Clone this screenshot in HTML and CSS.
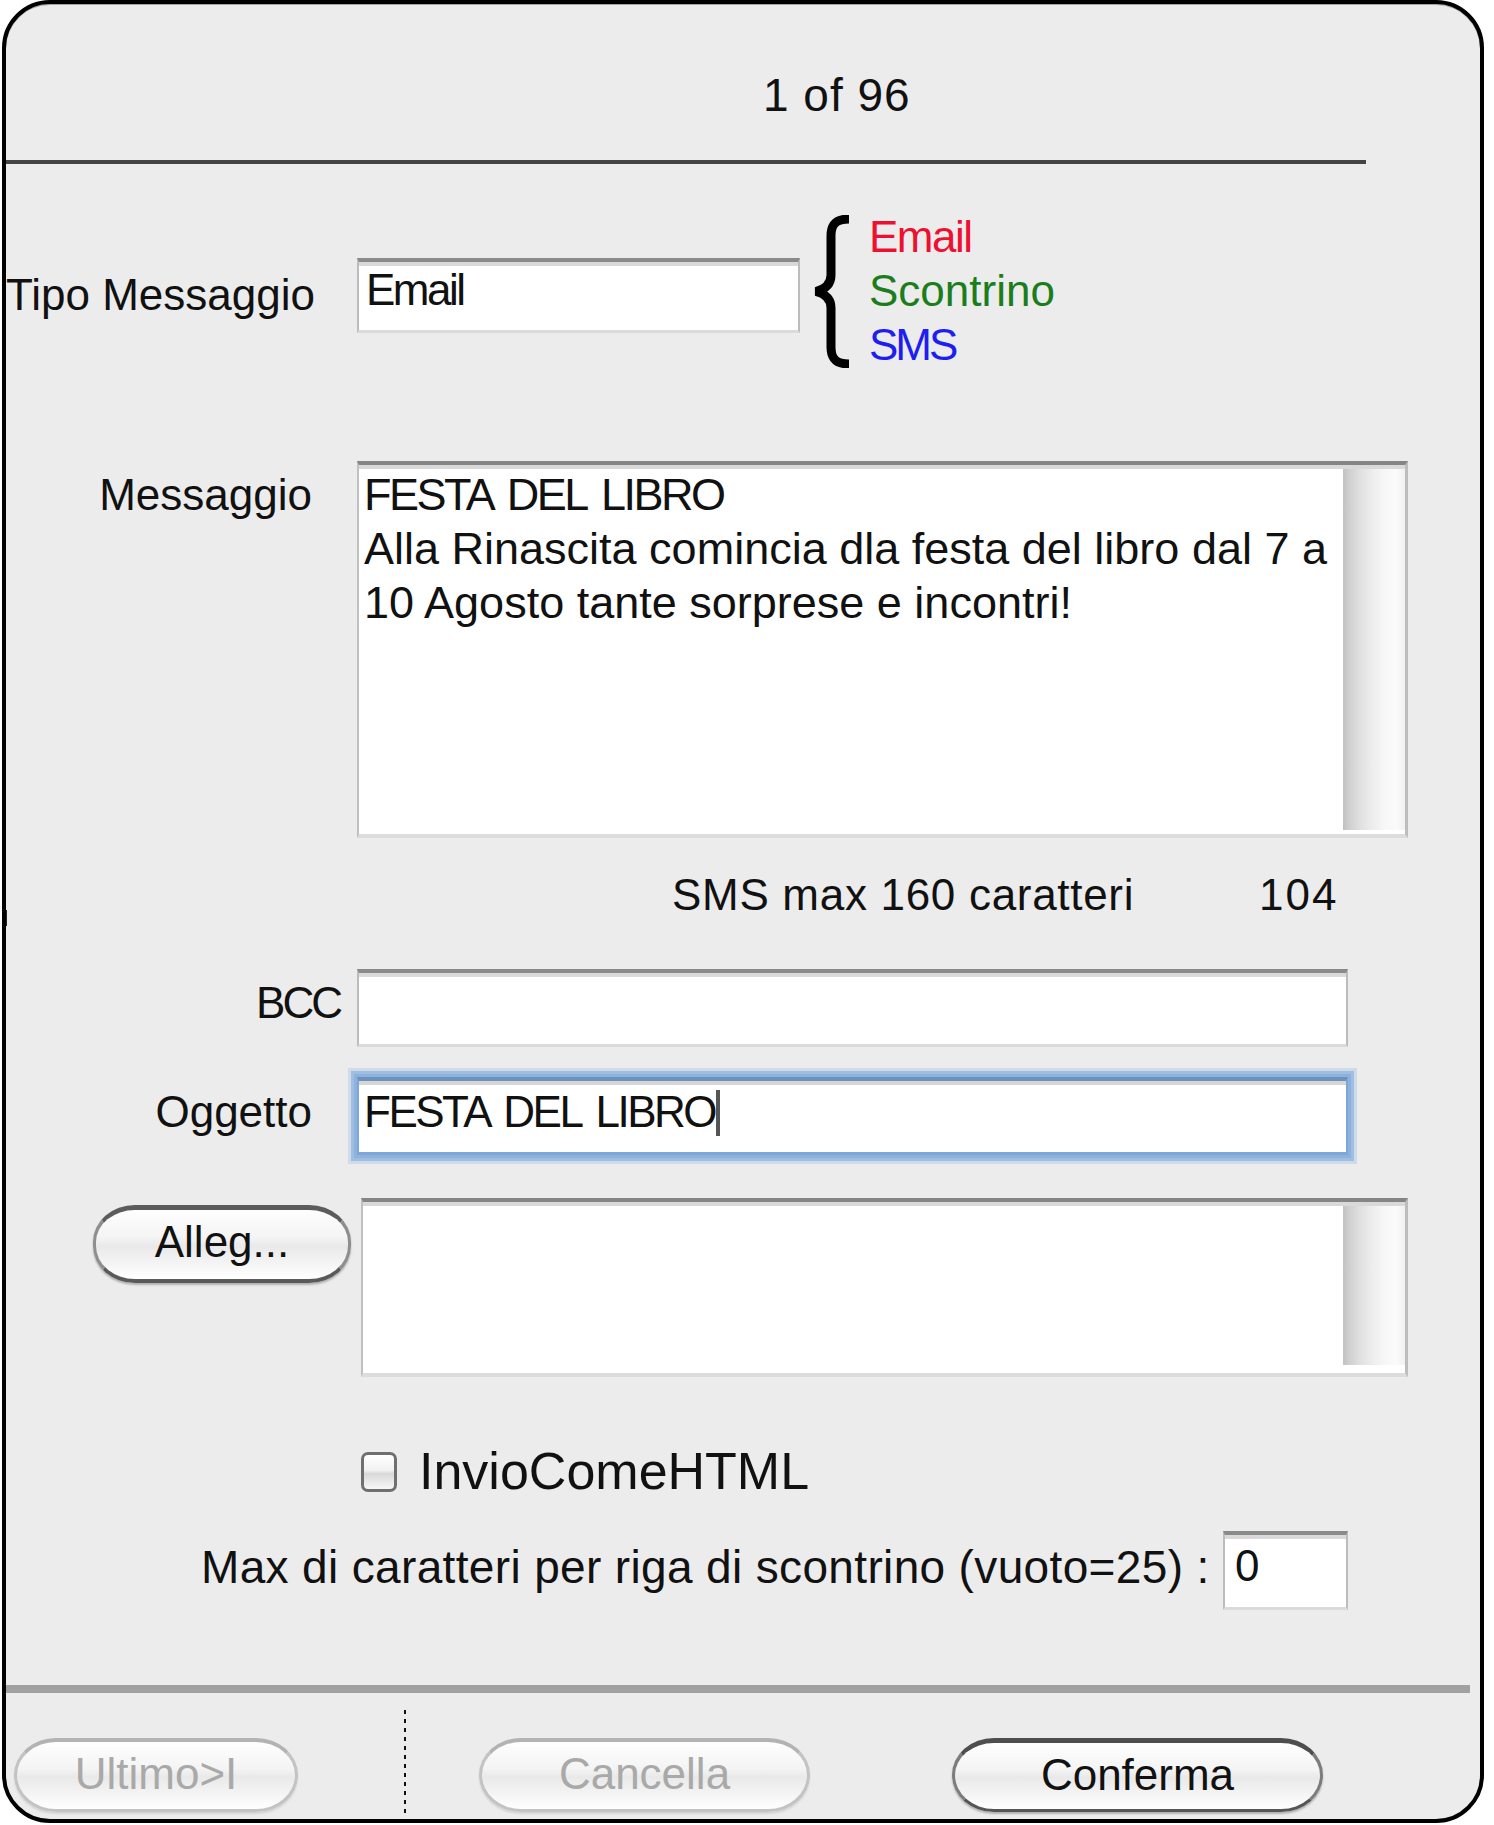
FILE: index.html
```html
<!DOCTYPE html>
<html>
<head>
<meta charset="utf-8">
<title>Messaggio</title>
<link rel="stylesheet" href="styles.css">
</head>
<body>
<div class="window">
  <span class="edge-mark"></span>
  <div class="header"><span class="counter">1 of 96</span></div>
  <div class="rule"></div>

  <div class="row row-tipo">
    <div class="label label-tipo">Tipo Messaggio</div>
    <div class="field field-tipo"><span class="caps">Email</span></div>
    <svg class="brace" viewBox="0 0 40 153" width="40" height="153">
      <path d="M36 4 C23 4 18 9 18 21 L18 60 C18 69 13 74 3 76.5 C13 79 18 84 18 93 L18 132 C18 144 23 149 36 149" fill="none" stroke="#000" stroke-width="9"/>
    </svg>
    <ul class="types">
      <li class="t-email">Email</li>
      <li class="t-scontrino">Scontrino</li>
      <li class="t-sms">SMS</li>
    </ul>
  </div>

  <div class="row row-msg">
    <div class="label label-msg">Messaggio</div>
    <div class="field area area-msg">
      <div class="area-text"><span class="caps">FESTA DEL LIBRO</span><br>Alla Rinascita comincia dla festa del libro dal 7 a<br>10 Agosto tante sorprese e incontri!</div>
      <div class="scroll"></div>
    </div>
  </div>

  <div class="row row-count">
    <span class="count-label">SMS max 160 caratteri</span>
    <span class="count-num">104</span>
  </div>

  <div class="row row-bcc">
    <div class="label label-bcc">BCC</div>
    <div class="field field-wide"></div>
  </div>

  <div class="row row-ogg">
    <div class="label label-ogg">Oggetto</div>
    <div class="field field-wide focused"><span class="caps">FESTA DEL LIBRO</span><span class="caret"></span></div>
  </div>

  <div class="row row-att">
    <button class="btn btn-alleg">Alleg...</button>
    <div class="field area area-att">
      <div class="area-text"></div>
      <div class="scroll scroll-att"></div>
    </div>
  </div>

  <div class="row row-check">
    <span class="checkbox"></span>
    <span class="check-label">InvioComeHTML</span>
  </div>

  <div class="row row-max">
    <span class="max-label">Max di caratteri per riga di scontrino (vuoto=25) :</span>
    <div class="field field-max">0</div>
  </div>

  <div class="sep"></div>

  <div class="row row-buttons">
    <button class="btn btn-disabled btn-ultimo">Ultimo&gt;I</button>
    <div class="dots"></div>
    <button class="btn btn-disabled btn-cancella">Cancella</button>
    <button class="btn btn-default btn-conferma">Conferma</button>
  </div>
</div>
</body>
</html>
```

FILE: styles.css
```css
html, body {
  margin: 0;
  padding: 0;
  background: #ffffff;
}

body {
  font-family: "Liberation Sans", Arial, sans-serif;
  font-size: 44px;
  color: #111;
}

.window {
  position: relative;
  box-sizing: border-box;
  width: 1482px;
  height: 1823px;
  margin-left: 2px;
  border: 4px solid #000;
  border-radius: 48px;
  background: #ececec;
  box-shadow: inset 0 1px 0 #a5a5a5;
  overflow: hidden;
}

.edge-mark {
  position: absolute;
  left: -2px;
  top: 906px;
  width: 3px;
  height: 16px;
  background: #222;
}

.header {
  box-sizing: border-box;
  height: 156px;
  padding: 69px 0 0 757px;
  line-height: 44px;
}

.counter {
  font-size: 46px;
  letter-spacing: 1px;
}

.rule {
  width: 1362px;
  height: 4px;
  margin-left: -2px;
  background: #444;
}

.row {
  display: flex;
  align-items: flex-start;
}

.label {
  flex: none;
  text-align: right;
  white-space: nowrap;
  line-height: 54px;
}

.caps {
  letter-spacing: -2.5px;
  word-spacing: 6px;
}

/* generic aqua text field */
.field {
  flex: none;
  box-sizing: border-box;
  background: #fff;
  border-style: solid;
  border-width: 4px 2px 3px 2px;
  border-color: #8a8a8a #bcbcbc #dadada #bcbcbc;
  box-shadow: inset 0 4px 0 #d9d9d9;
  line-height: 54px;
  white-space: nowrap;
}

/* Tipo messaggio */
.row-tipo {
  margin-top: 51px;
  height: 153px;
}

.label-tipo {
  width: 306px;
  margin-top: 53px;
}

.field-tipo {
  width: 443px;
  height: 75px;
  margin: 43px 0 0 45px;
  padding: 1px 0 0 7px;
}

.brace {
  flex: none;
  display: block;
  margin-left: 13px;
}

.types {
  list-style: none;
  margin: -5px 0 0 16px;
  padding: 0;
  line-height: 54px;
}

.t-email { color: #ee1030; letter-spacing: -1.5px; }
.t-scontrino { color: #1b7d1b; }
.t-sms { color: #1e1ef2; letter-spacing: -3px; }

/* Messaggio */
.row-msg {
  margin-top: 93px;
}

.label-msg {
  width: 306px;
  margin-top: 7px;
}

.area {
  display: flex;
  border-width: 4px 3px 4px 2px;
  border-color: #858585 #bdbdbd #dcdcdc #c0c0c0;
}

.area-msg {
  width: 1051px;
  height: 377px;
  margin-left: 45px;
}

.area-text {
  flex: 1;
  padding: 3px 0 0 5px;
  font-size: 45px;
  line-height: 54px;
}

.scroll {
  flex: none;
  width: 62px;
  margin: 4px 0 4px 0;
  background: linear-gradient(to right, #c1c1c1 0, #cfcfcf 10%, #dedede 25%, #ececec 45%, #f6f6f6 65%, #fbfbfb 85%, #f1f1f1 100%);
}

/* SMS count */
.row-count {
  margin-top: 30px;
  padding-left: 666px;
  line-height: 54px;
}

.count-label {
  width: 587px;
  flex: none;
  letter-spacing: 0.7px;
}

.count-num {
  letter-spacing: 2px;
}

/* BCC */
.row-bcc {
  margin-top: 47px;
}

.label-bcc {
  width: 334px;
  margin-top: 7px;
  letter-spacing: -3px;
}

.field-wide {
  width: 991px;
  height: 78px;
  margin-left: 17px;
  padding: 4px 0 0 5px;
}

/* Oggetto */
.row-ogg {
  margin-top: 30px;
}

.label-ogg {
  width: 306px;
  margin-top: 8px;
}

.row-ogg .field-wide {
  margin-left: 45px;
}

.focused {
  border-color: #6f92bd #7fa6d4 #7fa6d4 #7fa6d4;
  box-shadow: inset 0 4px 0 #d6d6d6, 0 0 0 3px #8cb2de, 0 0 0 6px rgba(140, 178, 222, 0.7), 0 0 0 9px rgba(140, 178, 222, 0.3);
}

.caret {
  display: inline-block;
  width: 4px;
  height: 46px;
  margin-left: 1px;
  vertical-align: -9px;
  background: #555;
}

/* Allegati */
.row-att {
  margin-top: 43px;
}

.btn {
  flex: none;
  box-sizing: border-box;
  font: inherit;
  color: #111;
  padding: 0 0 4px 0;
  height: 74px;
  line-height: 64px;
  text-align: center;
  border: 3px solid #8e8e8e;
  border-top: 4px solid #5c5c5c;
  border-bottom-color: #666;
  border-radius: 42px / 37px;
  background: linear-gradient(#fefefe 0, #f4f4f4 40%, #e9e9e9 52%, #f3f3f3 75%, #ffffff 100%);
  box-shadow: 0 2px 2px rgba(0, 0, 0, 0.25);
  cursor: default;
}

.btn-alleg {
  width: 258px;
  height: 78px;
  margin: 7px 0 0 87px;
  padding-bottom: 8px;
  border-top-width: 5px;
  border-bottom: 4px solid #5a5a5a;
}

.area-att {
  width: 1047px;
  height: 179px;
  margin-left: 10px;
}

.scroll-att {
  margin-bottom: 8px;
}

/* Checkbox */
.row-check {
  margin-top: 75px;
  height: 40px;
}

.checkbox {
  flex: none;
  box-sizing: border-box;
  width: 36px;
  height: 40px;
  margin-left: 355px;
  border: 3px solid #6f6f6f;
  border-radius: 7px;
  background: linear-gradient(#ffffff 0, #f1f1f1 45%, #d9d9d9 55%, #f7f7f7 100%);
}

.check-label {
  margin: -8px 0 0 22px;
  font-size: 52px;
  line-height: 54px;
  white-space: nowrap;
}

/* Max caratteri */
.row-max {
  margin-top: 39px;
  padding-left: 195px;
}

.max-label {
  flex: none;
  width: 1022px;
  margin-top: 9px;
  font-size: 46px;
  line-height: 54px;
  letter-spacing: 0.35px;
  white-space: nowrap;
}

.field-max {
  width: 125px;
  height: 79px;
  padding: 4px 0 0 10px;
}

/* bottom */
.sep {
  width: 1466px;
  height: 8px;
  margin: 75px 0 0 -2px;
  background: #a1a1a1;
}

.row-buttons {
  margin-top: 17px;
}

.dots {
  flex: none;
  width: 2px;
  height: 103px;
  margin-left: 106px;
  background: repeating-linear-gradient(to bottom, #111 0, #111 4px, transparent 4px, transparent 9px);
}

.btn-disabled {
  color: #a9a9a9;
  border-color: #c3c3c3;
  border-top-color: #b3b3b3;
  box-shadow: 0 2px 2px rgba(0, 0, 0, 0.1);
}

.btn-ultimo {
  width: 284px;
  margin: 28px 0 0 8px;
}

.btn-cancella {
  width: 331px;
  margin: 28px 0 0 73px;
}

.btn-conferma {
  width: 371px;
  margin: 28px 0 0 142px;
}

.btn-default {
  border-top: 5px solid #4e4e4e;
  border-left-color: #7c7c7c;
  border-right-color: #7c7c7c;
  border-bottom-color: #555;
}
```
